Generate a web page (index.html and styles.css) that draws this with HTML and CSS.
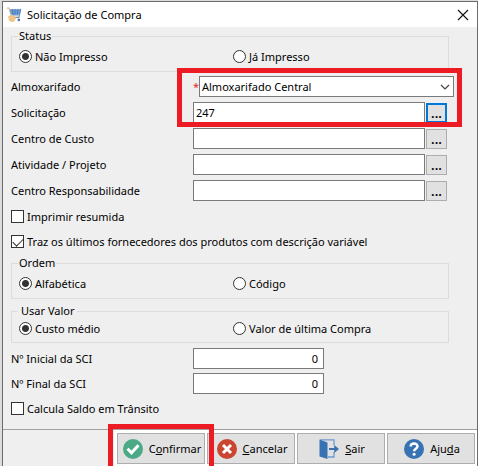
FILE: index.html
```html
<!DOCTYPE html>
<html lang="pt-BR">
<head>
<meta charset="utf-8">
<title>Solicitação de Compra</title>
<link rel="stylesheet" href="styles.css">
</head>
<body>
<main class="dialog">
  <header class="titlebar">
    <svg class="cart" viewBox="0 0 16 16" aria-hidden="true">
      <path d="M0 .7h2.2L5 10.5h8.5" fill="none" stroke="#d9b98c" stroke-width="1.2"/>
      <path d="M2.6 1.5H15l-1.8 7H4.6z" fill="#8db4dc"/>
      <path d="M3 3.7h11.4M3.8 6h10M5.6 1.5l1 7M8.5 1.5v7M11.6 1.5l-.8 7M14.8 1.3l-2 9.2H6" fill="none" stroke="#4279b4" stroke-width=".9"/>
      <circle cx="12.6" cy="13.2" r="1.4" fill="#4279b4"/>
      <path d="M1.2 9.2 4 8l4.4 1.2 1 2.2-1.5 3.4-3.5.6-2.4-1.6z" fill="#f3c48a"/>
    </svg>
    <h1 class="title">Solicitação de Compra</h1>
    <button class="close" type="button" aria-label="Fechar">
      <svg viewBox="0 0 12 12" aria-hidden="true"><path d="M1 1l10 10M11 1L1 11" fill="none" stroke="#111" stroke-width="1.1"/></svg>
    </button>
  </header>

  <form class="form">
    <fieldset class="group">
      <legend>Status</legend>
      <label class="option"><input type="radio" name="status" checked>Não Impresso</label>
      <label class="option"><input type="radio" name="status">Já Impresso</label>
    </fieldset>

    <div class="fields">
      <div class="highlight"></div>
      <div class="row">
        <label for="almox">Almoxarifado</label>
        <div class="control wide">
          <span class="required">*</span>
          <div class="combo">
            <select id="almox"><option>Almoxarifado Central</option></select>
            <svg class="arrow" viewBox="0 0 10 6" aria-hidden="true"><path d="M1 1l4 4 4-4" fill="none" stroke="#444" stroke-width="1.2"/></svg>
          </div>
        </div>
      </div>
      <div class="row">
        <label for="solic">Solicitação</label>
        <div class="control"><input class="text" id="solic" type="text" value="247"><button class="browse focused" type="button">...</button></div>
      </div>
      <div class="row">
        <label for="custo">Centro de Custo</label>
        <div class="control"><input class="text" id="custo" type="text"><button class="browse" type="button">...</button></div>
      </div>
      <div class="row">
        <label for="ativ">Atividade / Projeto</label>
        <div class="control"><input class="text" id="ativ" type="text"><button class="browse" type="button">...</button></div>
      </div>
      <div class="row">
        <label for="resp">Centro Responsabilidade</label>
        <div class="control"><input class="text" id="resp" type="text"><button class="browse" type="button">...</button></div>
      </div>
    </div>

    <div class="stack">
      <label class="option"><input type="checkbox">Imprimir resumida</label>
      <label class="option"><input type="checkbox" checked>Traz os últimos fornecedores dos produtos com descrição variável</label>
    </div>

    <fieldset class="group">
      <legend>Ordem</legend>
      <label class="option"><input type="radio" name="ordem" checked>Alfabética</label>
      <label class="option"><input type="radio" name="ordem">Código</label>
    </fieldset>
    <fieldset class="group compact">
      <legend>Usar Valor</legend>
      <label class="option"><input type="radio" name="valor" checked>Custo médio</label>
      <label class="option"><input type="radio" name="valor">Valor de última Compra</label>
    </fieldset>

    <div class="stack">
      <div class="row">
        <label for="ini">Nº Inicial da SCI</label>
        <div class="control"><input class="text number" id="ini" type="text" value="0"></div>
      </div>
      <div class="row">
        <label for="fim">Nº Final da SCI</label>
        <div class="control"><input class="text number" id="fim" type="text" value="0"></div>
      </div>
      <label class="option"><input type="checkbox">Calcula Saldo em Trânsito</label>
    </div>
  </form>

  <footer class="toolbar">
    <div class="actions">
      <div class="highlight"></div>
      <button class="action" type="button">
        <svg viewBox="0 0 20 20" aria-hidden="true"><circle cx="10" cy="10" r="10" fill="#4ca985"/><path d="M4.5 9.8l4 4 7-7.6" fill="none" stroke="#fff" stroke-width="3"/></svg>
        <span>C<u>o</u>nfirmar</span>
      </button>
      <button class="action" type="button">
        <svg viewBox="0 0 20 20" aria-hidden="true"><circle cx="10" cy="10" r="10" fill="#cb4630"/><path d="M6 6l8 8M14 6l-8 8" fill="none" stroke="#fff" stroke-width="3"/></svg>
        <span><u>C</u>ancelar</span>
      </button>
      <button class="action" type="button">
        <svg viewBox="0 0 20 20" aria-hidden="true"><path d="M1 .9h14v5.4M15 13v5H9" fill="none" stroke="#6d9bd0" stroke-width="1.3"/><path d="M.5.5L8.5 3.5V20l-8-2.6z" fill="#3772b3"/><path d="M10 8.9h5.2V6L20 10l-4.8 4v-2.9H10z" fill="#3772b3"/></svg>
        <span><u>S</u>air</span>
      </button>
      <button class="action" type="button">
        <svg viewBox="0 0 20 20" aria-hidden="true"><circle cx="10" cy="10" r="10" fill="#3772b3"/><path d="M6.6 7.6C6.6 3.3 13.5 3.5 13.5 7.3c0 2.4-3.4 2.5-3.4 5" fill="none" stroke="#fff" stroke-width="2.5"/><circle cx="10.1" cy="15.2" r="1.5" fill="#fff"/></svg>
        <span>Aju<u>d</u>a</span>
      </button>
    </div>
  </footer>
</main>
</body>
</html>
```
FILE: styles.css
```css
* { box-sizing: border-box; }

body {
  margin: 0;
  padding: 1px 0 0 2px;
  overflow: hidden;
  background: #dcdcdc;
  color: #000;
  font: 11px/16px "Noto Sans", "Open Sans", sans-serif;
}

button, input, select { font: inherit; color: inherit; }

.dialog {
  display: flex;
  flex-direction: column;
  min-height: calc(100vh - 1px);
  border: 1px solid #6b6b6b;
  border-bottom: 0;
  background: #efefef;
}

.titlebar {
  display: flex;
  align-items: center;
  gap: 5px;
  height: 25px;
  padding: 0 8px 0 4px;
  background: #fff;
}
.cart { width: 15px; height: 16px; }
.title { flex: 1; margin: 0; font-size: 11px; font-weight: 400; }
.close { display: flex; padding: 0; border: 0; background: none; }
.close svg { width: 12px; height: 12px; }

.form { padding: 1px 23px 0 8px; }

.group {
  display: grid;
  grid-template-columns: 214px 1fr;
  height: 44px;
  margin: 0 5px 4px 0;
  padding: 4px 7px 0;
  border: 1px solid #dcdcdc;
}
.group legend { margin-left: -1px; padding: 0 1px; }
.compact { height: 40px; margin-bottom: 5px; padding-top: 1px; }
.compact legend { padding: 0 3px; }
.group .option { height: 17px; }

.option { display: flex; align-items: center; gap: 3px; height: 21px; }
.option input {
  appearance: none;
  flex: none;
  width: 13px;
  height: 13px;
  margin: 0;
  border: 1px solid #333;
  background: #fff;
}
.option input[type="radio"] { border-radius: 50%; }
.option input[type="radio"]:checked { background: radial-gradient(circle, #333 3px, #fff 4px); }
.option input[type="checkbox"]:checked::before {
  content: "";
  display: block;
  width: 9px;
  height: 5px;
  margin: 2px 0 0 1px;
  border: solid #333;
  border-width: 0 0 1px 1px;
  transform: rotate(-45deg);
}

.fields { position: relative; display: grid; gap: 5px; margin-bottom: 5px; }
.stack { display: grid; gap: 4px; margin-bottom: 3px; }
.row { display: grid; grid-template-columns: 182px 1fr; align-items: center; }
.control { display: flex; gap: 1px; height: 21px; margin-right: 7px; }
.wide { gap: 0; margin-right: 0; }
.required { width: 6px; padding-top: 3px; color: #ed1c24; }

.text {
  flex: 1;
  min-width: 0;
  padding: 0 2px;
  border: 1px solid #7a7a7a;
  background: #fff;
}
.number { flex: 0 0 131px; padding-right: 5px; text-align: right; }

.combo { position: relative; flex: 1; display: flex; }
.combo select {
  appearance: none;
  width: 100%;
  padding: 0 2px;
  border: 1px solid #7a7a7a;
  border-radius: 0;
  background: #fff;
}
.arrow { position: absolute; right: 4px; top: 8px; width: 10px; height: 6px; pointer-events: none; }

.browse {
  width: 21px;
  height: 20px;
  margin-top: 1px;
  padding: 0;
  border: 1px solid #adadad;
  background: #e1e1e1;
  font-size: 13px;
  font-weight: 600;
}
.focused { border: 2px solid #0078d7; }

.highlight {
  position: absolute;
  border: 5px solid #ed1c24;
  pointer-events: none;
  z-index: 1;
}
.fields .highlight { inset: -8px -8px auto 166px; height: 59px; }

.toolbar {
  flex: 1;
  display: flex;
  justify-content: flex-end;
  margin-top: 7px;
  border-top: 1px solid #a0a0a0;
}
.actions {
  position: relative;
  display: grid;
  grid-template-columns: repeat(4, 88px);
  gap: 2px;
  padding: 3px 2px 2px 3px;
  background: #fff;
}
.actions .highlight { left: -6px; top: -6px; width: 106px; height: 48px; }
.action {
  display: flex;
  align-items: center;
  justify-content: center;
  gap: 6px;
  height: 31px;
  padding: 0 0 0 2px;
  border: 1px solid #adadad;
  background: #e1e1e1;
}
.action svg { flex: none; width: 20px; height: 20px; }
```
